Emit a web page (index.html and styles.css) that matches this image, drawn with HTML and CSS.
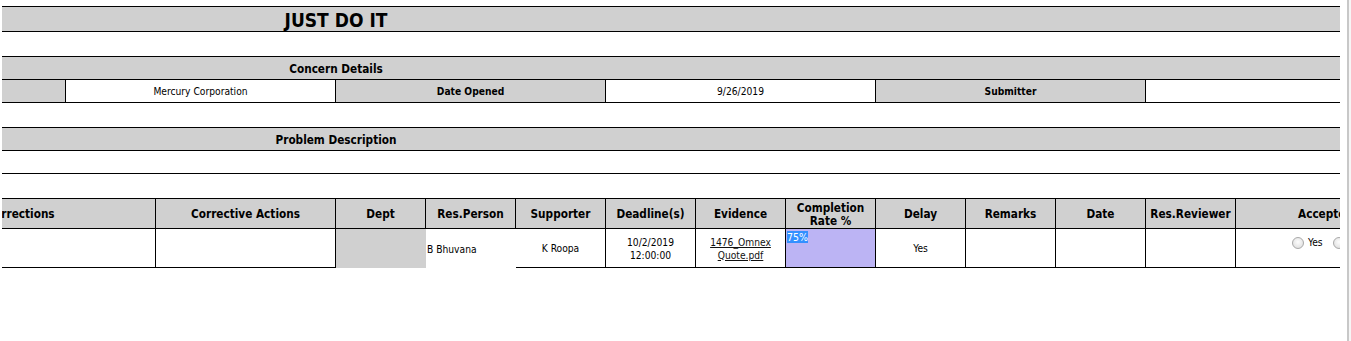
FILE: index.html
```html
<!DOCTYPE html>
<html lang="en">
<head>
<meta charset="utf-8">
<title>Concern</title>
<link rel="stylesheet" href="styles.css">
</head>
<body>
<div class="page">
  <div class="viewport">
    <div class="sheet">
      <section class="block">
        <div class="row band title-row"><div class="span4 title">JUST DO IT</div></div>
      </section>

      <section class="block">
        <div class="row band heading-row"><div class="span4 heading">Concern Details</div></div>
        <div class="row concern-grid">
          <div class="cell label"></div>
          <div class="cell value">Mercury Corporation</div>
          <div class="cell label">Date Opened</div>
          <div class="cell value">9/26/2019</div>
          <div class="cell label">Submitter</div>
          <div class="cell value last"></div>
        </div>
      </section>

      <section class="block">
        <div class="row band heading-row"><div class="span4 heading">Problem Description</div></div>
        <div class="row empty-row"></div>
      </section>

      <section class="block actions">
        <div class="row act-grid act-head">
          <div class="hcell">S.No</div>
          <div class="hcell">Corrections</div>
          <div class="hcell">Corrective Actions</div>
          <div class="hcell">Dept</div>
          <div class="hcell">Res.Person</div>
          <div class="hcell">Supporter</div>
          <div class="hcell">Deadline(s)</div>
          <div class="hcell">Evidence</div>
          <div class="hcell">Completion Rate %</div>
          <div class="hcell">Delay</div>
          <div class="hcell">Remarks</div>
          <div class="hcell">Date</div>
          <div class="hcell">Res.Reviewer</div>
          <div class="hcell">Accepted</div>
        </div>
        <div class="act-grid act-body">
          <div class="dcell"></div>
          <div class="dcell"></div>
          <div class="dcell"></div>
          <div class="dcell dept"></div>
          <div class="dcell plain left">B Bhuvana</div>
          <div class="dcell">K Roopa</div>
          <div class="dcell">10/2/2019 12:00:00</div>
          <div class="dcell"><a href="#" class="file-link">1476_Omnex Quote.pdf</a></div>
          <div class="dcell rate"><span class="rate-value">75%</span></div>
          <div class="dcell">Yes</div>
          <div class="dcell"></div>
          <div class="dcell"></div>
          <div class="dcell"></div>
          <div class="dcell top">
            <label class="opt"><input type="radio" name="acc" class="radio"> Yes</label>
            <label class="opt"><input type="radio" name="acc" class="radio"> No</label>
          </div>
        </div>
      </section>
    </div>
  </div>
  <div class="vscroll"></div>
  <div class="vtrack"></div>
</div>
</body>
</html>
```

FILE: styles.css
```css
* { box-sizing: border-box; }

html, body {
  margin: 0;
  padding: 0;
  background: #fff;
}

body {
  height: 341px;
  overflow: hidden;
  font-family: "DejaVu Sans Condensed", "DejaVu Sans", sans-serif;
  font-stretch: condensed;
  color: #000;
}

.page {
  display: flex;
  height: 341px;
}

.viewport {
  margin-left: 2px;
  width: 1338px;
  flex: none;
  overflow: hidden;
  padding-top: 6px;
}

.sheet {
  width: 1620px;
  margin-left: -206px;
}

.vscroll {
  margin-left: 7px;
  width: 2px;
  background: #c8c8c8;
  flex: none;
}

.vtrack {
  flex: 1;
  background: #f6f6f6;
}

.block {
  border-top: 1px solid #000;
  margin-bottom: 24px;
}

.row {
  border-bottom: 1px solid #000;
}

.band {
  background: #d0d0d0;
}

.title-row {
  height: 25px;
  display: flex;
  align-items: center;
  padding-top: 2px;
}

.heading-row {
  height: 23px;
  display: flex;
  align-items: center;
  padding-top: 2px;
}

.empty-row {
  height: 23px;
}

.span4 {
  width: 1080px;
  text-align: center;
  font-weight: bold;
}

.title {
  font-size: 19px;
}

.heading {
  font-size: 11.7px;
}

.concern-grid {
  display: grid;
  grid-template-columns: repeat(6, 270px);
  height: 23px;
}

.cell {
  border-right: 1px solid #000;
  display: flex;
  align-items: center;
  justify-content: center;
  font-size: 10.2px;
  padding-top: 1px;
}

.cell.last {
  border-right: none;
}

.cell.label {
  background: #d0d0d0;
  font-weight: bold;
}

.cell.value {
  background: #fff;
}

.act-grid {
  display: grid;
  grid-template-columns: 90px 270px 180px repeat(10, 90px) 180px;
}

.act-head {
  height: 30px;
  background: #d0d0d0;
}

.hcell {
  border-right: 1px solid #000;
  display: flex;
  align-items: center;
  justify-content: center;
  text-align: center;
  font-weight: bold;
  font-size: 11.7px;
  line-height: 13px;
  padding: 2px 4px 0;
}

.act-body {
  height: 39px;
}

.dcell {
  border-right: 1px solid #000;
  border-bottom: 1px solid #000;
  display: flex;
  align-items: center;
  justify-content: center;
  text-align: center;
  font-size: 10.2px;
  line-height: 13px;
  padding: 1px 4px 0;
}

.dcell.dept {
  background: #d0d0d0;
  border: none;
}

.dcell.plain {
  border: none;
}

.dcell.left {
  justify-content: flex-start;
  padding-left: 1px;
}

.dcell.rate {
  background: #bcb4f4;
  align-items: flex-start;
  justify-content: flex-start;
  padding: 2px 0 0 1px;
}

.rate-value {
  background: #3390ff;
  color: #fff;
  font-size: 10.5px;
  line-height: 12px;
}

.file-link {
  color: #111;
  text-decoration: underline;
}

.dcell.top {
  align-items: flex-start;
  padding-top: 7px;
  padding-left: 6px;
  gap: 10px;
}

.opt {
  display: inline-flex;
  align-items: center;
  gap: 4px;
  font-size: 10.2px;
  white-space: nowrap;
}

.radio {
  appearance: none;
  -webkit-appearance: none;
  margin: 0;
  width: 12px;
  height: 12px;
  border-radius: 50%;
  border: 1px solid #a9a9a9;
  background: radial-gradient(circle at 50% 40%, #fdfdfd 0%, #e4e4e4 70%, #d6d6d6 100%);
}
```
